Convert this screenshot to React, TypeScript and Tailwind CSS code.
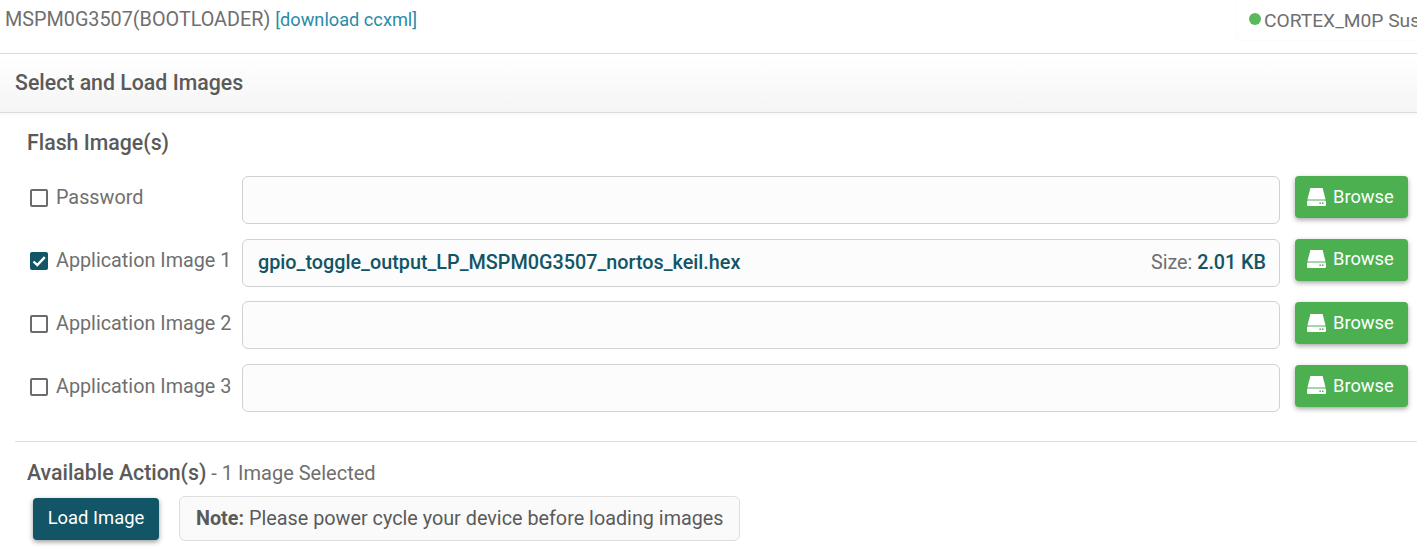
import React from "react";

const rows = [
  { label: "Password", checked: false, labelClass: "-translate-y-[2px]", buttonClass: "-translate-y-[3px]" },
  { label: "Application Image 1", checked: true, file: "gpio_toggle_output_LP_MSPM0G3507_nortos_keil.hex", size: "2.01 KB", labelClass: "-translate-y-[2px]", buttonClass: "-translate-y-[3px]" },
  { label: "Application Image 2", checked: false, labelClass: "-translate-y-[1px]", buttonClass: "-translate-y-[2px]" },
  { label: "Application Image 3", checked: false, labelClass: "-translate-y-[1px]", buttonClass: "-translate-y-[2px]" },
];

function DriveIcon() {
  return (
    <svg viewBox="0 0 19 18" className="h-[18px] w-[19px] shrink-0">
      <path d="M3.4 0h12.2L18.6 11.6H.4z" fill="#fff" />
      <path fillRule="evenodd" d="M1.3 12.6h16.4c.7 0 1.3.5 1.3 1.2v2.9c0 .7-.6 1.3-1.3 1.3H1.3C.6 18 0 17.4 0 16.7v-2.9c0-.7.6-1.2 1.3-1.2zM12.4 14.6v1.4h1.5v-1.4zM15 14.6v1.4h1.5v-1.4z" fill="#fff" />
    </svg>
  );
}

function Checkbox({ checked }: { checked: boolean }) {
  if (checked) {
    return (
      <span className="flex h-[18px] w-[18px] shrink-0 items-center justify-center rounded-[2px] bg-[#115566]">
        <svg viewBox="0 0 18 18" className="h-[18px] w-[18px]">
          <path d="M3.5 9.5l3.8 3.6L14.8 5.2" fill="none" stroke="#fff" strokeWidth="2.4" />
        </svg>
      </span>
    );
  }
  return <span className="h-[18px] w-[18px] shrink-0 rounded-[2px] border-2 border-[#6b6b6b]" />;
}

function FileRow({ label, checked, file, size, labelClass, buttonClass }: { label: string; checked: boolean; file?: string; size?: string; labelClass: string; buttonClass: string }) {
  return (
    <div className="flex h-[48px] items-center">
      <div className={"flex w-[227px] shrink-0 items-center gap-[8px] pl-[15px] text-[19.8px] text-[#6f6f6f] " + labelClass}>
        <Checkbox checked={checked} />
        <span className="whitespace-nowrap">{label}</span>
      </div>
      <div className="flex h-[48px] w-[1038px] shrink-0 items-center justify-between rounded-[6px] border border-[#d2d2d2] bg-[#fcfcfc] pl-[15px] pr-[13px]">
        {file && <span className="text-[19.8px] font-medium text-[#115566]">{file}</span>}
        {size && (
          <span className="text-[19.7px] text-[#6f6f6f]">
            Size: <span className="font-medium text-[#115566]">{size}</span>
          </span>
        )}
      </div>
      <button className={"ml-[15px] flex h-[42px] w-[113px] shrink-0 items-center justify-start gap-[7px] rounded-[4px] bg-[#4caf50] pl-[12px] pb-[1px] text-[18.3px] text-white shadow-[0_2px_5px_rgba(0,0,0,0.35)] " + buttonClass}>
        <DriveIcon />
        Browse
      </button>
    </div>
  );
}

export default function App() {
  return (
    <div className="h-[553px] w-[1417px] overflow-hidden bg-white font-['Roboto',sans-serif]">
      <div className="flex h-[53px] items-start justify-between pl-[5px]">
        <div className="pt-[5px] text-[19.8px] text-[#6f6f6f]">
          MSPM0G3507(BOOTLOADER) <span className="text-[18.2px] text-[#2a8ba8]">[download ccxml]</span>
        </div>
        <div className="flex h-[41px] w-[181px] shrink-0 items-start gap-[3px] overflow-hidden whitespace-nowrap rounded-bl-[6px] border-b border-l border-[#fbfbfb] pl-[12px] pt-[7px] text-[19.2px] text-[#6f6f6f]">
          <span className="mt-[6px] h-[12px] w-[12px] shrink-0 rounded-full bg-[#5cb85c]" />
          CORTEX_M0P Sus
        </div>
      </div>
      <div className="flex h-[60px] items-center border-y border-[#dcdcdc] bg-gradient-to-b from-white to-[#f5f5f5] pl-[15px] text-[21.3px] font-medium text-[#5a5a5a] shadow-[0_1px_3px_rgba(0,0,0,0.05)]">
        Select and Load Images
      </div>
      <div className="pl-[15px]">
        <div className="pl-[12px] pt-[17px] text-[21.3px] font-medium leading-[26px] text-[#5a5a5a]">Flash Image(s)</div>
        <div className="mt-[20px] flex flex-col gap-[14.67px]">
          {rows.map((r) => (
            <FileRow key={r.label} {...r} />
          ))}
        </div>
        <div className="mt-[29px] border-t border-[#dfdfdf] pl-[12px] pt-[18px] text-[20px] leading-[26px] text-[#6f6f6f]">
          <span className="text-[21.3px] font-medium text-[#5a5a5a]">Available Action(s)</span> - 1 Image Selected
        </div>
        <div className="mt-[10px] flex items-center pl-[18px]">
          <button className="h-[42px] w-[126px] translate-y-[1px] rounded-[4px] bg-[#115566] pb-[3px] text-[18.4px] text-white shadow-[0_2px_5px_rgba(0,0,0,0.4)]">
            Load Image
          </button>
          <div className="ml-[20px] flex h-[45px] w-[561px] items-center rounded-[6px] border border-[#dedede] bg-[#fafafa] pl-[16px] text-[19.8px] text-[#5a5a5a]">
            <span className="mr-[5px] font-bold">Note:</span> Please power cycle your device before loading images
          </div>
        </div>
      </div>
    </div>
  );
}
